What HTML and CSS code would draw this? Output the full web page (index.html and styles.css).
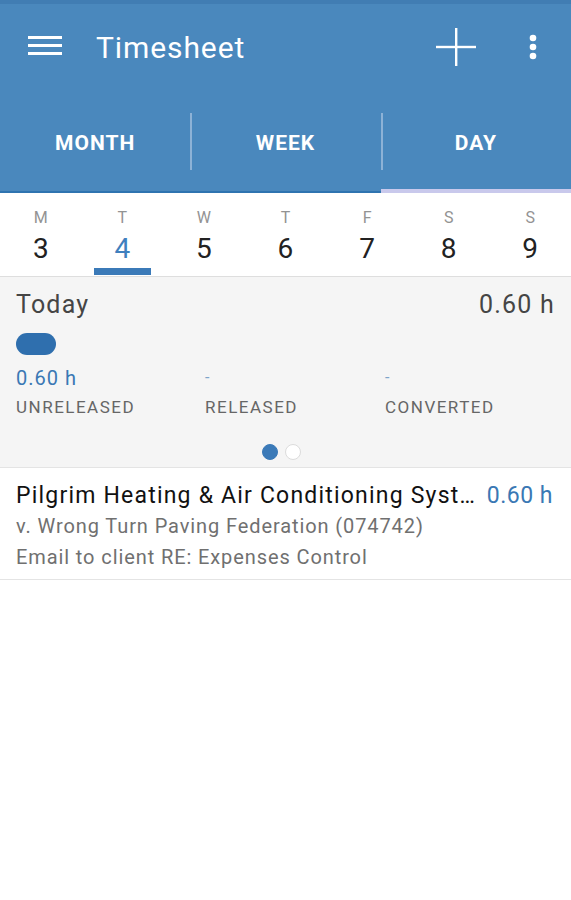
FILE: index.html
```html
<!DOCTYPE html>
<html lang="en">
<head>
  <meta charset="UTF-8">
  <title>Timesheet</title>
  <link rel="stylesheet" href="styles.css">
</head>
<body>
  <div class="appbar">
    <div class="toolbar">
      <svg class="menu" width="34" height="20" viewBox="0 0 34 20">
        <rect x="0" y="0" width="34" height="3" fill="#fff"/>
        <rect x="0" y="8" width="34" height="3" fill="#fff"/>
        <rect x="0" y="16" width="34" height="3" fill="#fff"/>
      </svg>
      <h1 class="title">Timesheet</h1>
      <svg class="add" width="40" height="38" viewBox="0 0 40 38">
        <rect x="19" y="0" width="2.4" height="38" fill="#fff"/>
        <rect x="0" y="17.8" width="40" height="2.4" fill="#fff"/>
      </svg>
      <svg class="more" width="8" height="26" viewBox="0 0 8 26">
        <circle cx="4" cy="4" r="3.3" fill="#fff"/>
        <circle cx="4" cy="13" r="3.3" fill="#fff"/>
        <circle cx="4" cy="22" r="3.3" fill="#fff"/>
      </svg>
    </div>
    <div class="tabs">
      <div class="tab">MONTH</div>
      <div class="tab">WEEK</div>
      <div class="tab active">DAY</div>
    </div>
  </div>

  <div class="days">
    <div class="day"><span class="dow">M</span><span class="num">3</span></div>
    <div class="day selected"><span class="dow">T</span><span class="num">4</span></div>
    <div class="day"><span class="dow">W</span><span class="num">5</span></div>
    <div class="day"><span class="dow">T</span><span class="num">6</span></div>
    <div class="day"><span class="dow">F</span><span class="num">7</span></div>
    <div class="day"><span class="dow">S</span><span class="num">8</span></div>
    <div class="day"><span class="dow">S</span><span class="num">9</span></div>
  </div>

  <div class="summary">
    <div class="summary-head">
      <span>Today</span>
      <span>0.60 h</span>
    </div>
    <div class="pill"></div>
    <div class="stats">
      <div class="stat">
        <span class="value">0.60 h</span>
        <span class="label">UNRELEASED</span>
      </div>
      <div class="stat">
        <span class="value dash">-</span>
        <span class="label">RELEASED</span>
      </div>
      <div class="stat">
        <span class="value dash">-</span>
        <span class="label">CONVERTED</span>
      </div>
    </div>
    <div class="pager">
      <span class="dot on"></span>
      <span class="dot"></span>
    </div>
  </div>

  <div class="entry">
    <div class="entry-top">
      <span class="client">Pilgrim Heating &amp; Air Conditioning Syst…</span>
      <span class="hours">0.60 h</span>
    </div>
    <div class="matter">v. Wrong Turn Paving Federation (074742)</div>
    <div class="note">Email to client RE: Expenses Control</div>
  </div>
</body>
</html>
```

FILE: styles.css
```css
body {
  margin: 0;
  font-family: Roboto, "Liberation Sans", sans-serif;
  background-color: #fff;
  width: 571px;
}
.appbar {
  background-color: #4a88bd;
  border-top: 4px solid #417db3;
}
.toolbar {
  height: 86px;
  display: flex;
  align-items: center;
  padding: 0 34px 0 28px;
}
.menu {
  margin-top: -2px;
}
.title {
  flex: 1;
  margin: 0 0 0 34px;
  color: #fff;
  font-size: 30px;
  font-weight: 400;
  letter-spacing: 0.9px;
}
.add {
  margin-right: 53px;
}
.tabs {
  display: grid;
  grid-template-columns: repeat(3, 1fr);
  height: 101px;
  border-bottom: 2px solid #2f74b0;
}
.tab {
  display: flex;
  align-items: center;
  justify-content: center;
  color: #fff;
  font-size: 21px;
  font-weight: 700;
  letter-spacing: 1px;
  padding-top: 5px;
  position: relative;
}
.tab + .tab::before {
  content: "";
  position: absolute;
  left: 0;
  top: 23px;
  height: 57px;
  border-left: 2px solid #8db2d6;
}
.tab.active {
  box-shadow: inset 0 -4px 0 #c9c9ec;
  margin-bottom: -2px;
  padding-bottom: 2px;
}
.days {
  display: grid;
  grid-template-columns: repeat(7, 1fr);
  height: 83px;
  border-bottom: 1px solid #dedede;
}
.day {
  display: flex;
  flex-direction: column;
  align-items: center;
  padding-top: 15px;
}
.dow {
  font-size: 16px;
  color: #939393;
  line-height: 20px;
}
.num {
  font-size: 28px;
  color: #222;
  line-height: 36px;
  margin-top: 3px;
  width: 57px;
  text-align: center;
  padding-bottom: 1px;
}
.selected .num {
  color: #3f7fbe;
  border-bottom: 7px solid #3b7ab8;
}
.summary {
  background-color: #f5f5f5;
  border-bottom: 1px solid #e4e4e4;
  padding: 12px 16px 0;
  height: 178px;
}
.summary-head {
  display: flex;
  justify-content: space-between;
  font-size: 25px;
  color: #454545;
  line-height: 32px;
  letter-spacing: 1.2px;
}
.pill {
  width: 40px;
  height: 22px;
  border-radius: 11px;
  background-color: #2f6fae;
  margin-top: 12px;
}
.stats {
  display: grid;
  grid-template-columns: 189px 180px 1fr;
  margin-top: 10px;
}
.stat {
  display: flex;
  flex-direction: column;
}
.value {
  font-size: 20px;
  color: #3a78b4;
  line-height: 26px;
  letter-spacing: 1px;
}
.value.dash {
  font-size: 16px;
  color: #7ea4c9;
}
.label {
  font-size: 17px;
  color: #666;
  line-height: 24px;
  margin-top: 4px;
  letter-spacing: 1.5px;
}
.pager {
  display: flex;
  justify-content: center;
  gap: 7px;
  margin-top: 25px;
  padding-right: 8px;
}
.dot {
  width: 16px;
  height: 16px;
  border-radius: 50%;
  box-sizing: border-box;
  border: 1px solid #dcdcdc;
  background-color: #fff;
}
.dot.on {
  background-color: #3b7ab8;
  border-color: #3b7ab8;
}
.entry {
  padding: 12px 18px 6px 16px;
  border-bottom: 1px solid #e4e4e4;
}
.entry-top {
  display: flex;
  align-items: baseline;
  gap: 9px;
  font-size: 23px;
  line-height: 31px;
}
.client {
  flex: 1;
  color: #111;
  white-space: nowrap;
  letter-spacing: 1.2px;
}
.hours {
  color: #3a78b4;
  letter-spacing: 0.5px;
}
.matter, .note {
  font-size: 20px;
  color: #707070;
  line-height: 31px;
  letter-spacing: 0.9px;
}
```
